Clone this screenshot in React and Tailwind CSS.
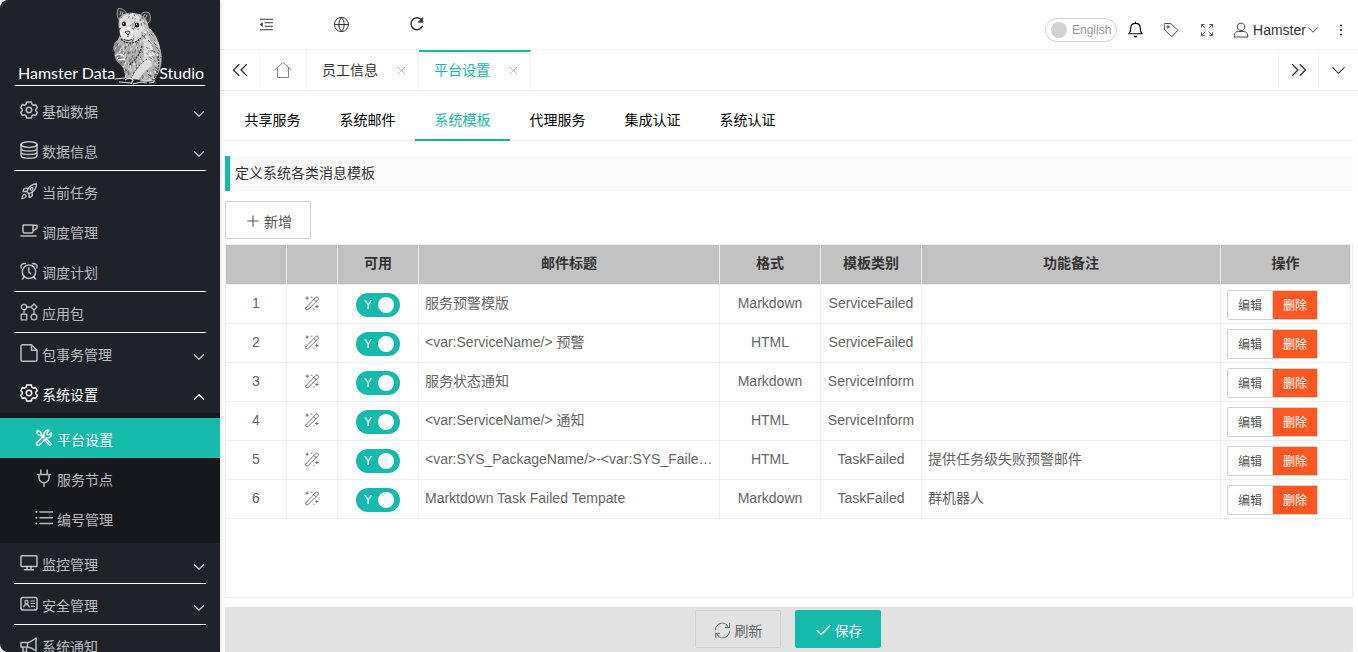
import React from 'react';
import { AiOutlineMenuFold } from 'react-icons/ai';
import {
  Check,
  ChevronDown,
  ChevronsLeft,
  ChevronsRight,
  ChevronUp,
  Globe,
  Plus,
  Rocket,
  X,
} from 'lucide-react';

const Glyph = ({ size = 18, width = 1.5, children }) => (
  <svg
    width={size}
    height={size}
    viewBox="0 0 18 18"
    fill="none"
    stroke="currentColor"
    strokeWidth={width}
    strokeLinecap="round"
    strokeLinejoin="round"
    className="shrink-0"
    aria-hidden="true"
  >
    {children}
  </svg>
);

const GearIcon = () => (
  <Glyph>
    <path d="M6.600 1h4.800l.6 2.400 1.400.8 2.200-.7 1.700 3.300L15.700 8.200v1.600l1.600 1.500-1.700 3.200-2.200-.7-1.400.8-.6 2.400H6.600L6 14.600l-1.400-.8-2.200.7L.7 11.300l1.600-1.500V8.200L.7 6.800l1.700-3.300 2.200.7L6 3.400z" />
    <circle cx="9" cy="9" r="2.700" />
  </Glyph>
);

const DatabaseIcon = () => (
  <Glyph>
    <ellipse cx="9" cy="3.600" rx="8" ry="2.800" />
    <path d="M1 3.600v10.800c0 1.600 3.600 2.800 8 2.800s8-1.200 8-2.800V3.600M1 7.200C1 8.800 4.600 10 9 10s8-1.200 8-2.800M1 10.800c0 1.600 3.600 2.800 8 2.800s8-1.200 8-2.800" />
  </Glyph>
);

const RocketIcon = () => (
  <Rocket size={19} strokeWidth={1.800}>
    <circle cx="15.500" cy="8.500" r="1.800" />
  </Rocket>
);

const CupIcon = () => (
  <Glyph>
    <path d="M3 3h10v6.500a1.500 1.500 0 0 1-1.500 1.500h-7A1.500 1.500 0 0 1 3 9.500zM13 3.300h4v3L13 8.500M1 14h15" />
  </Glyph>
);

const AlarmIcon = () => (
  <Glyph>
    <circle cx="9" cy="9.700" r="6.700" />
    <path d="M8.800 6v4l2 1.800M1.200 5.800C.3 3.500 2.500.8 5.500 1.600M16.800 5.800c.9-2.300-1.300-5-4.300-4.200M4.200 14.800l-1.700 2.200M13.800 14.800l1.700 2.200" />
  </Glyph>
);

const AppsIcon = () => (
  <Glyph width={1.3}>
    <circle cx="4" cy="4" r="2.700" />
    <path d="M14 1l3 3-3 3-3-3zM6.700 4H11M4 6.700v4.300M14 7v4M1.200 11.200h5.600v5.600H1.200z" />
    <circle cx="14" cy="14" r="2.900" />
  </Glyph>
);

const FileIcon = () => (
  <Glyph>
    <path d="M11.500.8h-9A1.500 1.500 0 0 0 1 2.300v13.400a1.500 1.500 0 0 0 1.500 1.500h13a1.500 1.500 0 0 0 1.500-1.500V6.300zM11.500.8v5.500H17" />
  </Glyph>
);

const ToolsIcon = () => (
  <Glyph width={1.4}>
    <path d="M1.500 2.800l1.300-1.500 3 1.900.3 1.800 3.200 3.200M1.500 2.800l1.900 3 1.800.3L8 9M10.500 9.300l5.900 5.600-1.600 1.700-5.600-5.900" />
    <path d="M16.300 3.800l-2.200 2-2-.2-.2-2 2-2.200a3.900 3.900 0 0 0-4.700 5L2 13.600a1.700 1.700 0 0 0 2.400 2.400l7.200-7.200a3.900 3.900 0 0 0 4.700-5z" />
  </Glyph>
);

const PlugIcon = () => (
  <Glyph>
    <path d="M5.800 1v4.500M12.200 1v4.500M2.500 5.500h13M4 5.500v3.300a5 5 0 0 0 10 0V5.500M9 13.800V17.500" />
  </Glyph>
);

const ListIcon = () => (
  <Glyph>
    <path d="M5 3h12.500M5 8.700h12.500M5 14.400h12.500" />
    <path strokeWidth="2" d="M1.300 3h.1M1.300 8.700h.1M1.300 14.400h.1" />
  </Glyph>
);

const DisplayIcon = () => (
  <Glyph>
    <rect x="1" y="1.800" width="16" height="10.700" rx="0.8" />
    <path d="M7 12.500v2.800M11 12.500v2.800M4.500 15.800h9" />
  </Glyph>
);

const CardIcon = () => (
  <Glyph>
    <rect x="1" y="2.500" width="16" height="12.500" rx="1.500" />
    <circle cx="6.500" cy="7" r="1.700" strokeWidth="1.200" />
    <path strokeWidth="1.200" d="M3.800 12c.3-1.800 1.200-2.700 2.700-2.700s2.400.9 2.700 2.700M11 6h3.500M11 8.500h3.500M11.500 11.300h3" />
  </Glyph>
);

const HornIcon = () => (
  <Glyph>
    <path d="M1 6.500h6.500c3.500-.5 6-2.500 8.500-4.500v13c-2.500-2-5-3.500-8.500-4H1zM7.500 6.500V11M3 11v5h3.500V11" />
  </Glyph>
);

const ReloadIcon = () => (
  <Glyph size={16} width={1.6}>
    <path d="M15 11.500A6.700 6.700 0 1 1 14.500 5" />
    <path d="M15.500 2v5h-5z" fill="currentColor" strokeWidth="0.8" />
  </Glyph>
);

const SyncIcon = () => (
  <Glyph size={17} width={1}>
    <path d="M1.500 8.500A7.200 7.200 0 0 1 15.500 6M16.500 1.800V6H12M16.500 9.500A7.200 7.200 0 0 1 2.500 12M1.500 16.200V12H6" />
  </Glyph>
);

const BellIcon = () => (
  <Glyph size={17} width={1.2}>
    <path d="M2 13.500c1.700-1.500 2-3 2-6C4 4.300 6 2.500 9 2.500s5 1.800 5 5c0 3 .3 4.500 2 6zM9 2.300V1.200M7.500 16c.8 1 2.200 1 3 0" />
  </Glyph>
);

const TagIcon = () => (
  <Glyph size={16} width={1}>
    <path d="M1.500 2.300c0-.5.3-.8.800-.8l6.700.5 7.700 7.400-7 7.100L2 9z" />
    <circle cx="5.500" cy="5.500" r="1.200" />
  </Glyph>
);

const ExpandIcon = () => (
  <Glyph size={14} width={1}>
    <path d="M2 5.500V2h3.500M2 2l4.500 4.500M12.500 2H16v3.500M16 2l-4.500 4.500M2 12.500V16h3.500M2 16l4.500-4.500M16 12.500V16h-3.500M16 16l-4.500-4.500" />
  </Glyph>
);

const UserIcon = () => (
  <Glyph size={16} width={1}>
    <circle cx="9" cy="5.500" r="4.200" />
    <path d="M1.500 16.500V15c0-2.500 2-4.300 4.500-4.300h6c2.500 0 4.500 1.800 4.500 4.300v1.500z" />
  </Glyph>
);

const HomeIcon = () => (
  <Glyph size={18} width={0.9}>
    <path d="M1 8.500L9 1.500l8 7M3.500 7v9.500h11V7" />
  </Glyph>
);

const WandIcon = () => (
  <Glyph size={16} width={1}>
    <path d="M2 14.500L13.500 2.500c1.500-1 3.500.8 2.500 2.500L4.500 16.500c-1.500 1-3.500-.5-2.500-2zM11 5l2.500 2.500M3.500 2v3M2 3.500h3M8 2.500h1M14.500 11.500v3M13 13h3M11 16h.5" />
  </Glyph>
);

// Short pen strokes that shade the mascot's coat
const noise = (n) => {
  const v = Math.sin(n * 127.1) * 43758.5453;
  return v - Math.floor(v);
};
const hatch = (count, seed) =>
  Array.from({ length: count }, (_, i) => {
    const x = noise(i + seed) * 52;
    const y = noise(i * 3 + seed + 0.5) * 74;
    const lean = (x - 22) / 14 + noise(i + seed + 0.3) - 0.5;
    return `M${x.toFixed(1)} ${y.toFixed(1)}l${lean.toFixed(1)} 2`;
  }).join('');

const Mascot = () => (
  <svg width="52" height="77" viewBox="0 0 52 77" className="-mx-1 shrink-0" aria-hidden="true">
    <defs>
      <clipPath id="coat">
        <path d="M9 9C14 3 27 4 33 9c3 3 4 7 5 11 6 5 10 13 11 20 3 9 2 21-4 29-4 6-12 6-17 3l-14-2c0-7-1-10-5-14-5-4-6-8-5-12-3-4-1-10 3-12 1-3 2-4 2-7-2-6-2-12 0-16z" />
      </clipPath>
    </defs>
    <path d="M8 12C5 7 6 2 8 0c5 1 7 4 8 6zM29 8c2-4 6-5 9-3 3 4 1 11-4 12z" fill="#3c3c3e" stroke="#aaa" strokeWidth="0.9" />
    <path d="M9 7l1-4M11 7l1-3M34 11l2-4M32 9l2-3" stroke="#ddd" strokeWidth="0.7" />
    <g clipPath="url(#coat)">
      <path d="M0 0h52v77H0z" fill="#b2b2b2" />
      <path d="M12 8c8-5 17-1 20 5 4 9-1 17-9 21-6 2-12-2-14-8-1-6-1-13 3-18z" fill="#dcdcdc" />
      <path d="M32 22c10 8 12 22 9 36l-13 8c6-9 5-26 4-44z" fill="#dadada" />
      <path d="M0 32c8 2 12 6 14 14l-2 12L0 54z" fill="#8c8c8c" />
      <path d={hatch(260, 1)} stroke="#3a3a3a" strokeWidth="0.6" />
      <path d={hatch(240, 700)} stroke="#f6f6f6" strokeWidth="0.8" />
      <path d="M10 31c6 6 14 5 20-1M2 52c6 3 9 7 12 15M47 48c2 8 0 16-4 22M31 38c-2 8-6 14-13 19" stroke="#3a3a3a" strokeWidth="1.300" fill="none" strokeDasharray="2 1" />
    </g>
    <path d="M9 22c1-3 4-4 7-3 5 0 8 3 7 7-1 4-5 6-8 5-4-1-7-5-6-9z" fill="#ececec" />
    <path d="M37 50c-7 3-11 11-17 21h8c4-7 10-10 13-15z" fill="#dedede" />
    <path d="M36 51c-7 4-11 11-16 19" fill="none" stroke="#555" strokeWidth="0.8" strokeDasharray="2 1" />
    <ellipse cx="13" cy="16" rx="1.900" ry="2.400" fill="#111" />
    <ellipse cx="26" cy="17" rx="2.300" ry="2.500" fill="#111" />
    <circle cx="12.500" cy="15.200" r="0.500" fill="#fff" />
    <circle cx="25.500" cy="16.200" r="0.600" fill="#fff" />
    <path d="M14 24c2-1 4-1 5 0l-2 3zM17 27v2M13 31c2 2 6 2 8 0M9 20c-2 3-1 7 1 9" fill="none" stroke="#333" strokeWidth="1" />
    <path d="M4 48c3-3 8-2 9 1M7 52c3-1 5 0 7-1" fill="none" stroke="#eee" strokeWidth="1.500" />
    <path d="M4 71l10-1M8 74l12 1M14 72c3-2 6-2 8 0l-2 4M22 76l8-2 6 1M30 72l14 1M38 75l5-1" fill="none" stroke="#ddd" strokeWidth="1.200" />
  </svg>
);

const menu = [
  { text: '基础数据', icon: <GearIcon />, arrow: true },
  { text: '数据信息', icon: <DatabaseIcon />, arrow: true, line: true },
  { text: '当前任务', icon: <RocketIcon /> },
  { text: '调度管理', icon: <CupIcon /> },
  { text: '调度计划', icon: <AlarmIcon />, line: true },
  { text: '应用包', icon: <AppsIcon />, line: true },
  { text: '包事务管理', icon: <FileIcon />, arrow: true },
  {
    text: '系统设置',
    icon: <GearIcon />,
    arrow: true,
    children: [
      { text: '平台设置', icon: <ToolsIcon />, active: true },
      { text: '服务节点', icon: <PlugIcon /> },
      { text: '编号管理', icon: <ListIcon /> },
    ],
  },
  { text: '监控管理', icon: <DisplayIcon />, arrow: true, line: true },
  { text: '安全管理', icon: <CardIcon />, arrow: true, line: true },
  { text: '系统通知', icon: <HornIcon /> },
];

const rows = [
  ['服务预警模版', 'Markdown', 'ServiceFailed', ''],
  ['<var:ServiceName/> 预警', 'HTML', 'ServiceFailed', ''],
  ['服务状态通知', 'Markdown', 'ServiceInform', ''],
  ['<var:ServiceName/> 通知', 'HTML', 'ServiceInform', ''],
  ['<var:SYS_PackageName/>-<var:SYS_FailedTask/>', 'HTML', 'TaskFailed', '提供任务级失败预警邮件'],
  ['Marktdown Task Failed Tempate', 'Markdown', 'TaskFailed', '群机器人'],
];

const columns = ['', '', '可用', '邮件标题', '格式', '模板类别', '功能备注', '操作'];
const sections = ['共享服务', '系统邮件', '系统模板', '代理服务', '集成认证', '系统认证'];

const MenuItem = ({ item }) => (
  <li>
    <a
      href="#"
      className={`flex h-10 items-center gap-1 pr-3 pl-5 ${item.children ? 'text-white' : 'text-white/70'}`}
    >
      <span className="flex w-[18px] shrink-0 justify-center">{item.icon}</span>
      <span className="flex-1 pt-1">{item.text}</span>
      {item.arrow && (
        <span className="pt-2">
          {item.children ? <ChevronUp size={18} strokeWidth={1.8} /> : <ChevronDown size={18} strokeWidth={1.8} />}
        </span>
      )}
    </a>
    {item.line && <div className="mx-3.5 h-px bg-white" />}
    {item.children && (
      <ul className="bg-[#17181d] py-[5px]">
        {item.children.map((child) => (
          <li key={child.text}>
            <a
              href="#"
              className={`flex h-10 items-center gap-1 pl-[35px] ${child.active ? 'bg-[#16baaa] text-white' : 'text-white/70'}`}
            >
              {child.icon}
              <span className="pt-1">{child.text}</span>
            </a>
          </li>
        ))}
      </ul>
    )}
  </li>
);

const Sidebar = () => (
  <aside className="z-10 w-[220px] shrink-0 overflow-hidden bg-[#20222a] shadow-[1px_0_5px_rgba(0,0,0,0.12)]">
    <div className="flex h-[90px] flex-col px-[15px] pt-2">
      <div className="flex h-[78px] items-end justify-between border-b border-white px-[3px] font-['Lato',sans-serif] text-base leading-5 whitespace-nowrap text-white">
        <span className="pb-0.5">Hamster Data</span>
        <Mascot />
        <span className="pb-0.5">Studio</span>
      </div>
    </div>
    <ul>
      {menu.map((item) => (
        <MenuItem key={item.text} item={item} />
      ))}
    </ul>
  </aside>
);

const TopBar = () => (
  <header className="flex h-[50px] shrink-0 items-center justify-between border-b border-[#f2f2f2] text-[#333]">
    <div className="flex pl-[9px]">
      <button type="button" aria-label="收起菜单" className="flex w-[75px] justify-center"><AiOutlineMenuFold size={17} /></button>
      <button type="button" aria-label="网站" className="flex w-[75px] justify-center"><Globe size={17} strokeWidth={1.4} /></button>
      <button type="button" aria-label="刷新页面" className="flex w-[75px] justify-center"><ReloadIcon /></button>
    </div>
    <div className="flex items-center pt-2.5">
      <button type="button" role="switch" aria-checked="false" className="flex h-6 w-[72px] items-center gap-[5px] rounded-full border border-[#d2d2d2] pl-[5px] text-xs text-[#999]">
        <span className="size-4 rounded-full bg-[#d2d2d2]" />
        English
      </button>
      <button type="button" aria-label="消息" className="flex w-9 justify-center text-black"><BellIcon /></button>
      <button type="button" aria-label="标签" className="flex w-9 justify-center"><TagIcon /></button>
      <button type="button" aria-label="全屏" className="flex w-9 justify-center"><ExpandIcon /></button>
      <button type="button" className="flex w-[99px] items-center justify-center gap-1 pl-1.5">
        <UserIcon />
        Hamster
        <ChevronDown size={18} strokeWidth={1.2} className="-ml-1.5" />
      </button>
      <button type="button" aria-label="更多" className="flex w-[34px] justify-center">
        <svg width="4" height="12" viewBox="0 0 4 12" fill="currentColor">
          <circle cx="2" cy="1.500" r="1.100" />
          <circle cx="2" cy="6" r="1.100" />
          <circle cx="2" cy="10.500" r="1.100" />
        </svg>
      </button>
    </div>
  </header>
);

const PageTab = ({ text, active }) => (
  <div className={`flex w-28 items-center justify-between border-t-2 border-r border-r-[#f2f2f2] pr-2.5 pb-0.5 pl-[15px] ${active ? 'border-t-[#16baaa] text-[#16baaa]' : 'border-t-transparent text-[#333]'}`}>
    <a href="#">{text}</a>
    <button type="button" aria-label="关闭" className="text-[#bbb]"><X size={13} strokeWidth={1.8} /></button>
  </div>
);

const PageTabs = () => (
  <nav className="flex h-[41px] shrink-0 border-b border-[#ececec] text-[#333]">
    <button type="button" aria-label="向左" className="flex w-10 items-center justify-center border-r border-[#f2f2f2]"><ChevronsLeft size={26} strokeWidth={1.2} /></button>
    <a href="#" aria-label="首页" className="flex w-[47px] items-center justify-center border-r border-[#f2f2f2] text-[#777]"><HomeIcon /></a>
    <PageTab text="员工信息" />
    <PageTab text="平台设置" active />
    <div className="flex-1" />
    <button type="button" aria-label="向右" className="flex w-10 items-center justify-center border-l border-[#f2f2f2]"><ChevronsRight size={26} strokeWidth={1.2} /></button>
    <button type="button" aria-label="页签操作" className="flex w-10 items-center justify-center border-l border-[#f2f2f2]"><ChevronDown size={23} strokeWidth={1.1} /></button>
  </nav>
);

const Row = ({ index, row }) => {
  const [title, format, type, note] = row;
  const cell = 'h-[39px] border-r border-b border-[#eee]';
  return (
    <tr>
      <td className={`${cell} p-0 pb-0.5 text-center`}>{index}</td>
      <td className={`${cell} p-0 pb-0.5`}><span className="flex justify-center"><WandIcon /></span></td>
      <td className={`${cell} p-0`}>
        <label className="relative mx-auto mt-0.5 block h-6 w-11">
          <input type="checkbox" defaultChecked aria-label={`可用 ${index}`} className="block h-6 w-11 appearance-none rounded-full bg-[#16baaa]" />
          <span className="absolute top-1 left-2 text-xs text-white">Y</span>
          <span className="absolute top-1 right-1.5 size-4 rounded-full bg-white" />
        </label>
      </td>
      <td className={`${cell} truncate px-1.5 pt-0 pb-0.5`}>{title}</td>
      <td className={`${cell} p-0 pb-0.5 text-center`}>{format}</td>
      <td className={`${cell} p-0 pb-0.5 text-center`}>{type}</td>
      <td className={`${cell} truncate px-1.5 pt-0 pb-0.5`}>{note}</td>
      <td className={`${cell} p-0`}>
        <div className="mt-0.5 flex px-1.5 text-xs">
          <button type="button" className="h-[30px] w-[46px] rounded-l-xs border border-[#d2d2d2] pt-0.5 text-[#555]">编辑</button>
          <button type="button" className="h-[30px] w-[45px] rounded-r-xs border border-l-0 border-[#d2d2d2] bg-[#ff5722] pt-0.5 text-white">删除</button>
        </div>
      </td>
    </tr>
  );
};

const TemplateTable = () => (
  <div className="mt-[5px] flex-1 overflow-hidden border border-[#eee] pr-px">
    <table className="w-full table-fixed border-separate border-spacing-0 text-[#666]">
      <colgroup>
        <col className="w-[61px]" />
        <col className="w-[51px]" />
        <col className="w-[81px]" />
        <col className="w-[301px]" />
        <col className="w-[101px]" />
        <col className="w-[101px]" />
        <col />
        <col className="w-[130px]" />
      </colgroup>
      <thead>
        <tr>
          {columns.map((name, i) => (
            <th key={i} className="h-10 border-r border-b border-[#eee] bg-[#c2c2c2] p-0 pb-1 font-bold text-[#333]">{name}</th>
          ))}
        </tr>
      </thead>
      <tbody>
        {rows.map((row, i) => (
          <Row key={i} index={i + 1} row={row} />
        ))}
      </tbody>
    </table>
  </div>
);

export default function App() {
  return (
    <div className="flex h-screen overflow-hidden rounded-lg bg-white font-['Liberation_Sans','Noto_Sans_CJK_SC',sans-serif] text-sm text-[#333]">
      <Sidebar />
      <div className="flex min-w-0 flex-1 flex-col">
        <TopBar />
        <PageTabs />
        <main className="flex min-h-0 flex-1 flex-col px-[5px]">
          <ul className="mt-2.5 flex h-10 shrink-0 border-b border-[#eee] text-black">
            {sections.map((name) => (
              <li key={name}>
                <a
                  href="#"
                  className={`flex h-10 w-[95px] items-center justify-center border-b-2 ${name === '系统模板' ? 'border-[#16b777] text-[#16baaa]' : 'border-transparent'}`}
                >
                  {name}
                </a>
              </li>
            ))}
          </ul>
          <h1 className="mt-[15px] flex h-[35px] shrink-0 items-center border-l-[5px] border-[#16baaa] bg-[#fafafa] pb-0.5 pl-[5px]">定义系统各类消息模板</h1>
          <div className="mt-2.5 flex">
            <button type="button" className="flex h-[38px] w-[86px] items-center justify-center gap-0.5 rounded-xs border border-[#d2d2d2] pt-0.5 text-[#555]">
              <Plus size={18} strokeWidth={1.4} />
              <span className="pt-0.5">新增</span>
            </button>
          </div>
          <TemplateTable />
          <footer className="mt-[9px] flex h-[45px] shrink-0 justify-center gap-3.5 bg-[#e2e2e2] pt-[3px] pr-0.5">
            <button type="button" className="flex h-[38px] w-[86px] items-center justify-center gap-1 rounded-xs border border-[#d2d2d2] pt-0.5 text-[#666]">
              <SyncIcon />
              <span className="pt-0.5">刷新</span>
            </button>
            <button type="button" className="flex h-[38px] w-[86px] items-center justify-center gap-0.5 rounded-xs bg-[#16baaa] pt-0.5 text-white">
              <Check size={19} strokeWidth={2} />
              <span className="pt-0.5">保存</span>
            </button>
          </footer>
        </main>
      </div>
    </div>
  );
}
